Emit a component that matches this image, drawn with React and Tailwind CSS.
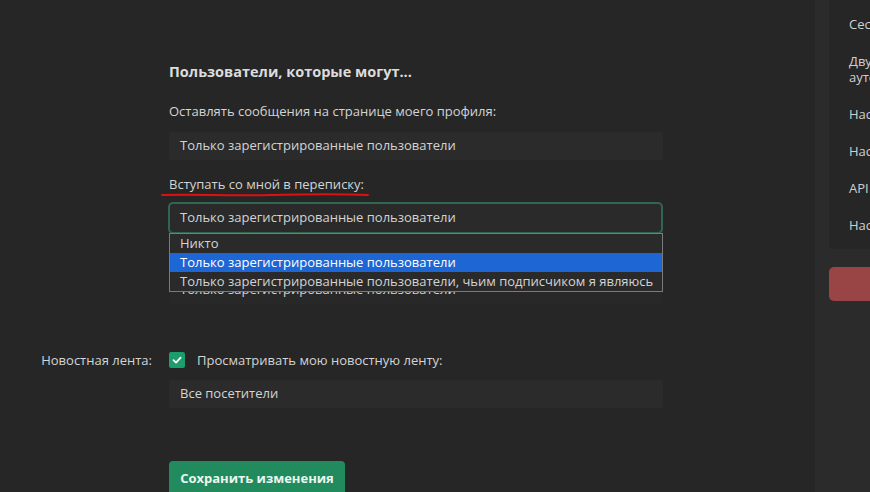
import React from 'react';

const font = "font-['Open_Sans','Liberation_Sans',sans-serif]";

const SelectBox = ({ value, className = '' }) => (
  <div className={`flex h-[28px] w-[494px] items-center rounded-[3px] bg-[#2b2b2b] px-[11px] text-[13px] ${className}`}>
    {value}
  </div>
);

const Row = ({ label, children, className = '' }) => (
  <div className={`flex ${className}`}>
    <div className="w-[169px] shrink-0 pr-[17px] text-right text-[13px] leading-[18px]">{label}</div>
    <div className="w-[494px]">{children}</div>
  </div>
);

export default function App() {
  const options = [
    'Никто',
    'Только зарегистрированные пользователи',
    'Только зарегистрированные пользователи, чьим подписчиком я являюсь',
  ];

  return (
    <div className={`flex h-[492px] w-[870px] overflow-hidden bg-[#262626] text-[#d4d4d4] ${font}`}>
      <main className="relative w-[815px] shrink-0 pt-[62px]">
        <Row label="">
          <h2 className="text-[14.5px] font-bold leading-[20px] text-[#dcdcdc]">Пользователи, которые могут...</h2>
        </Row>

        <Row label="" className="mt-[20px]">
          <p className="text-[13px] leading-[18px]">Оставлять сообщения на странице моего профиля:</p>
          <SelectBox className="mt-[12px]" value="Только зарегистрированные пользователи" />
        </Row>

        <Row label="" className="mt-[15px]">
          <p className="relative text-[13px] leading-[18px]">
            Вступать со мной в переписку:
            <svg className="absolute left-[-8px] top-[17px]" width="210" height="6" viewBox="0 0 210 6">
              <path d="M1 3 C 40 2, 60 4, 110 3 S 180 2, 207 3" stroke="#e01010" strokeWidth="2" fill="none" strokeLinecap="round" />
            </svg>
          </p>
          <div className="relative mt-[9px]">
            <div className="ml-[-1px] flex h-[32px] w-[495px] items-center rounded-[5px] border-2 border-[#2e6651] bg-[#2a2a2a] px-[10px] text-[13px]">
              Только зарегистрированные пользователи
            </div>
            <ul className="absolute left-0 top-[31px] z-10 w-[494px] border border-[#7a7a7a] bg-[#2a2a2a] text-[13px] leading-[19px]">
              {options.map((o, i) => (
                <li key={o} className={`whitespace-nowrap px-[10px] ${i === 1 ? 'bg-[#1d66d4] text-white' : ''}`}>{o}</li>
              ))}
            </ul>
          </div>
        </Row>

        <Row label="" className="mt-[15px]">
          <p className="text-[13px] leading-[18px]">Получать приглашения:</p>
          <SelectBox className="mt-[9px] bg-[#282828]" value="Только зарегистрированные пользователи" />
        </Row>

        <Row label="Новостная лента:" className="mt-[47px]">
          <label className="flex items-center gap-[12px] text-[13px] leading-[18px]">
            <span className="flex h-[16px] w-[16px] items-center justify-center rounded-[2px] bg-[#1b9e6c]">
              <svg width="10" height="10" viewBox="0 0 10 10">
                <path d="M1.5 5.2 L4 7.6 L8.6 2.6" stroke="white" strokeWidth="1.8" fill="none" strokeLinecap="round" strokeLinejoin="round" />
              </svg>
            </span>
            Просматривать мою новостную ленту:
          </label>
          <SelectBox className="mt-[11px]" value="Все посетители" />
        </Row>

        <Row label="" className="mt-[53px]">
          <button className="h-[36px] w-[176px] rounded-[4px] bg-[#218b5e] text-[13px] font-bold text-[#eef6f1]">
            Сохранить изменения
          </button>
        </Row>
      </main>

      <aside className="w-[55px] shrink-0 overflow-hidden bg-[#2b2b2b] pl-[14px]">
        <div className="w-[240px]">
          <nav className="flex flex-col gap-[21px] rounded-b-[4px] bg-[#262626] pb-[16px] pl-[20px] pt-[16px] text-[13px] leading-[16px] text-[#d0d0d0]">
            <span className="whitespace-nowrap">Сессии</span>
            <span className="whitespace-nowrap">Двухфакторная<br />аутентификация</span>
            <span className="whitespace-nowrap">Настройки приватности</span>
            <span className="whitespace-nowrap">Настройки уведомлений</span>
            <span className="whitespace-nowrap">API ключи</span>
            <span className="whitespace-nowrap">Настройки аккаунта</span>
          </nav>
          <div className="mt-[18px] h-[34px] rounded-[5px] bg-[#9a4545]"></div>
        </div>
      </aside>
    </div>
  );
}
